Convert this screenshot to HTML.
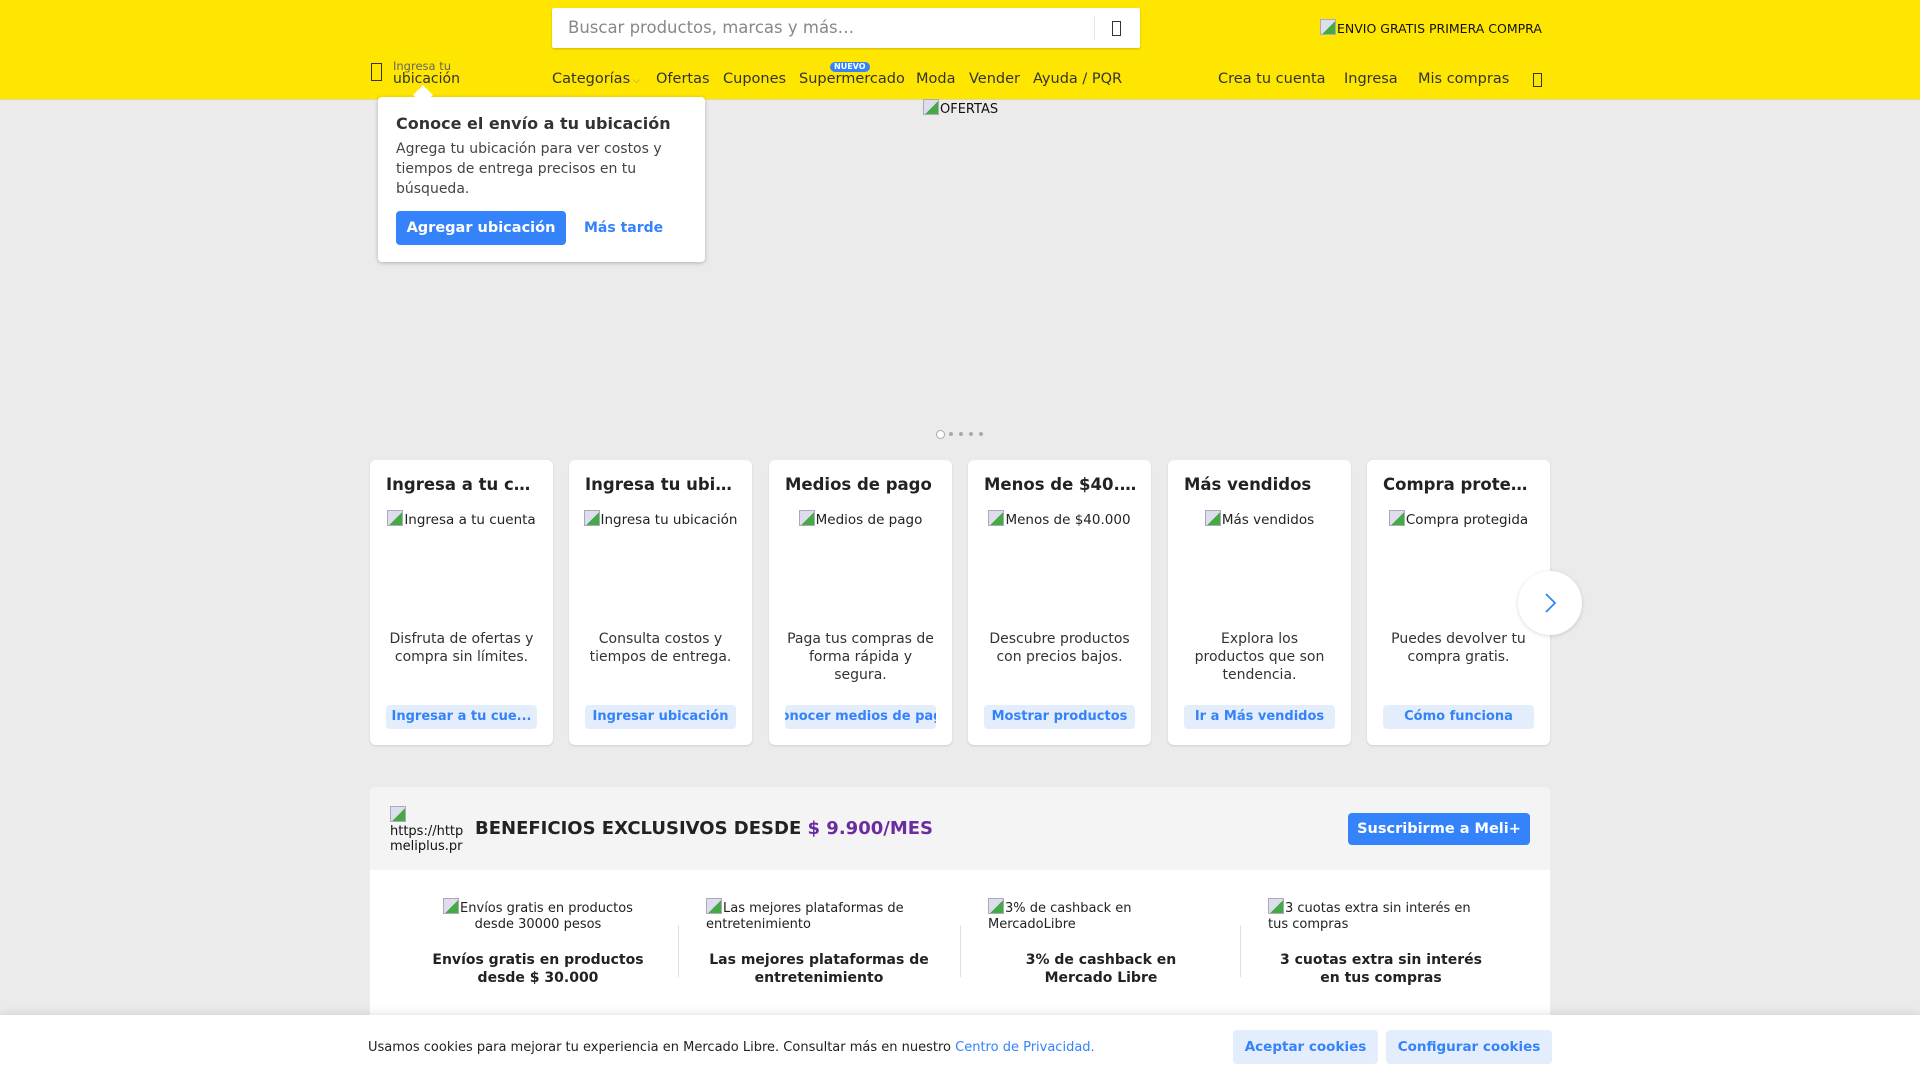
<!DOCTYPE html>
<html><head><meta charset="utf-8"><style>
*{box-sizing:border-box;margin:0;padding:0}
body{width:1920px;height:1080px;overflow:hidden;background:#ebebeb;font-family:"DejaVu Sans","Liberation Sans",sans-serif;color:#333;position:relative}
.a{position:absolute}
.hdr{left:0;top:0;width:1920px;height:100px;background:#ffe600;border-bottom:1px solid #e0d9a0}
.nav{font-size:14.5px;color:#333;top:71px;white-space:nowrap}
.tofu{border:1.5px solid #333;width:11px;height:18px}
.img{display:inline-block;width:16px;height:16px;vertical-align:-2px;background:linear-gradient(135deg,#dde 55%,#4a4 55%);border:1px solid #aab;margin-right:1px}
.card{background:#fff;border-radius:6px;width:183px;height:285px;top:460px;box-shadow:0 1px 2px rgba(0,0,0,.12)}
.card .t{position:absolute;left:16px;top:15px;width:155px;font-size:16.5px;font-weight:bold;color:#222;white-space:nowrap;overflow:hidden;text-overflow:ellipsis}
.card .i{position:absolute;left:0;width:100%;top:50px;text-align:center;font-size:13.5px;color:#222;white-space:nowrap}
.card .d{position:absolute;left:18px;right:18px;top:170px;text-align:center;font-size:14px;line-height:18px;color:#333}
.card .b{position:absolute;left:16px;right:16px;top:245px;height:24px;background:#e3edfb;border-radius:4px;color:#3483fa;font-weight:bold;font-size:13px;text-align:center;line-height:24px;white-space:nowrap;overflow:hidden}
.ben{top:898px;width:282px;text-align:center}
.ben .i{font-size:13px;color:#222;line-height:16px;padding:0 34px}
.ben .t{margin-top:18px;font-size:14px;font-weight:bold;color:#222;line-height:18px}
.div{top:925px;width:1px;height:52px;background:#e5dcec}
</style></head><body>
<div class="a hdr"></div>
<div class="a" style="left:552px;top:8px;width:588px;height:40px;background:#fff;border-radius:2px;box-shadow:0 1px 2px rgba(0,0,0,.2)"></div>
<div class="a" style="left:568px;top:18px;font-size:16.5px;color:#888">Buscar productos, marcas y más…</div>
<div class="a" style="left:1094px;top:16px;width:1px;height:24px;background:#e6e6e6"></div>
<div class="a tofu" style="left:1112px;top:21px;width:9px;height:15px"></div>
<div class="a" style="left:1320px;top:19px;font-size:12.5px;color:#111"><span class="img"></span>ENVIO GRATIS PRIMERA COMPRA</div>
<div class="a tofu" style="left:371px;top:63px"></div>
<div class="a" style="left:393px;top:59px;font-size:11.5px;color:#666">Ingresa tu</div>
<div class="a" style="left:393px;top:71px;font-size:14px;color:#333">ubicación</div>
<div class="a nav" style="left:552px">Categorías<span style="font-size:9px;color:#888"> ⌵</span></div>
<div class="a nav" style="left:656px">Ofertas</div>
<div class="a nav" style="left:723px">Cupones</div>
<div class="a nav" style="left:799px">Supermercado</div>
<div class="a" style="left:830px;top:62px;background:#3483fa;color:#fff;font-size:8px;font-weight:bold;border-radius:6px;padding:0 4px;line-height:10px">NUEVO</div>
<div class="a nav" style="left:916px">Moda</div>
<div class="a nav" style="left:969px">Vender</div>
<div class="a nav" style="left:1033px">Ayuda / PQR</div>
<div class="a nav" style="left:1218px">Crea tu cuenta</div>
<div class="a nav" style="left:1344px">Ingresa</div>
<div class="a nav" style="left:1418px">Mis compras</div>
<div class="a tofu" style="left:1533px;top:73px;width:9px;height:14px"></div>
<!-- popup -->
<div class="a" style="left:378px;top:97px;width:327px;height:165px;background:#fff;border-radius:4px;box-shadow:0 1px 4px rgba(0,0,0,.25)"></div>
<div class="a" style="left:416px;top:88px;width:14px;height:14px;background:#fff;transform:rotate(45deg)"></div>
<div class="a" style="left:396px;top:114px;font-size:16px;font-weight:bold;color:#333">Conoce el envío a tu ubicación</div>
<div class="a" style="left:396px;top:139px;width:290px;font-size:14px;line-height:20px;color:#444">Agrega tu ubicación para ver costos y tiempos de entrega precisos en tu búsqueda.</div>
<div class="a" style="left:396px;top:211px;width:170px;height:34px;background:#3483fa;border-radius:4px;color:#fff;font-weight:bold;font-size:14.5px;text-align:center;line-height:34px">Agregar ubicación</div>
<div class="a" style="left:584px;top:220px;color:#3483fa;font-weight:bold;font-size:14px">Más tarde</div>
<div class="a" style="left:923px;top:99px;font-size:13px;color:#111"><span class="img"></span>OFERTAS</div>
<div class="a" style="left:936px;top:430px;width:9px;height:9px;border:1.5px solid #aaa;border-radius:50%;background:#fff"></div>
<div class="a" style="left:949px;top:432px;width:4px;height:4px;border-radius:50%;background:#aaa"></div>
<div class="a" style="left:959px;top:432px;width:4px;height:4px;border-radius:50%;background:#aaa"></div>
<div class="a" style="left:969px;top:432px;width:4px;height:4px;border-radius:50%;background:#aaa"></div>
<div class="a" style="left:979px;top:432px;width:4px;height:4px;border-radius:50%;background:#aaa"></div>
<!-- cards -->
<div class="a card" style="left:370px"><div class="t">Ingresa a tu cuenta</div><div class="i"><span class="img"></span>Ingresa a tu cuenta</div><div class="d">Disfruta de ofertas y compra sin límites.</div><div class="b">Ingresar a tu cue...</div></div>
<div class="a card" style="left:569px"><div class="t">Ingresa tu ubicación</div><div class="i"><span class="img"></span>Ingresa tu ubicación</div><div class="d">Consulta costos y tiempos de entrega.</div><div class="b">Ingresar ubicación</div></div>
<div class="a card" style="left:769px"><div class="t">Medios de pago</div><div class="i"><span class="img"></span>Medios de pago</div><div class="d">Paga tus compras de forma rápida y segura.</div><div class="b" style="text-indent:-14px">Conocer medios de pago</div></div>
<div class="a card" style="left:968px"><div class="t">Menos de $40.000</div><div class="i"><span class="img"></span>Menos de $40.000</div><div class="d">Descubre productos con precios bajos.</div><div class="b">Mostrar productos</div></div>
<div class="a card" style="left:1168px"><div class="t">Más vendidos</div><div class="i"><span class="img"></span>Más vendidos</div><div class="d">Explora los productos que son tendencia.</div><div class="b">Ir a Más vendidos</div></div>
<div class="a card" style="left:1367px"><div class="t">Compra protegida</div><div class="i"><span class="img"></span>Compra protegida</div><div class="d">Puedes devolver tu compra gratis.</div><div class="b">Cómo funciona</div></div>
<div class="a" style="left:1518px;top:571px;width:64px;height:64px;border-radius:50%;background:#fff;box-shadow:0 1px 4px rgba(0,0,0,.15)"></div>
<svg class="a" style="left:1540px;top:592px" width="20" height="22" viewBox="0 0 20 22"><path d="M6 2 L15 11 L6 20" fill="none" stroke="#3483fa" stroke-width="1.8"/></svg>
<!-- meli+ -->
<div class="a" style="left:370px;top:787px;width:1180px;height:293px;background:#fff;border-radius:6px 6px 0 0"></div>
<div class="a" style="left:370px;top:787px;width:1180px;height:83px;background:#f4f4f4;border-radius:6px 6px 0 0"></div>
<div class="a" style="left:390px;top:806px;font-size:13px;line-height:15px;color:#111"><span class="img"></span><br>https://http<br>meliplus.pr</div>
<div class="a" style="left:475px;top:818px;font-size:18px;font-weight:bold;color:#222;white-space:nowrap">BENEFICIOS EXCLUSIVOS DESDE <span style="color:#6a2c9e">$ 9.900/MES</span></div>
<div class="a" style="left:1348px;top:813px;width:182px;height:32px;background:#3483fa;border-radius:4px;color:#fff;font-weight:bold;font-size:14.5px;text-align:center;line-height:32px">Suscribirme a Meli+</div>
<div class="a ben" style="left:397px"><div class="i"><span class="img"></span>Envíos gratis en productos desde 30000 pesos</div><div class="t">Envíos gratis en productos<br>desde $ 30.000</div></div>
<div class="a div" style="left:678px"></div>
<div class="a ben" style="left:678px"><div class="i" style="text-align:left;padding-left:28px"><span class="img"></span>Las mejores plataformas de entretenimiento</div><div class="t">Las mejores plataformas de<br>entretenimiento</div></div>
<div class="a div" style="left:960px"></div>
<div class="a ben" style="left:960px"><div class="i" style="text-align:left;padding-left:28px"><span class="img"></span>3% de cashback en MercadoLibre</div><div class="t">3% de cashback en<br>Mercado Libre</div></div>
<div class="a div" style="left:1240px"></div>
<div class="a ben" style="left:1240px"><div class="i" style="text-align:left;padding-left:28px"><span class="img"></span>3 cuotas extra sin interés en tus compras</div><div class="t">3 cuotas extra sin interés<br>en tus compras</div></div>
<!-- cookies -->
<div class="a" style="left:0;top:1015px;width:1920px;height:65px;background:#fff;box-shadow:0 -2px 8px rgba(0,0,0,.1)"></div>
<div class="a" style="left:368px;top:1040px;font-size:13px;color:#222;white-space:nowrap">Usamos cookies para mejorar tu experiencia en Mercado Libre. Consultar más en nuestro <span style="color:#3483fa">Centro de Privacidad.</span></div>
<div class="a" style="left:1233px;top:1030px;width:145px;height:34px;background:#e3edfb;border-radius:4px;color:#3483fa;font-weight:bold;font-size:13.5px;text-align:center;line-height:34px">Aceptar cookies</div>
<div class="a" style="left:1386px;top:1030px;width:166px;height:34px;background:#e3edfb;border-radius:4px;color:#3483fa;font-weight:bold;font-size:13.5px;text-align:center;line-height:34px">Configurar cookies</div>
</body></html>
